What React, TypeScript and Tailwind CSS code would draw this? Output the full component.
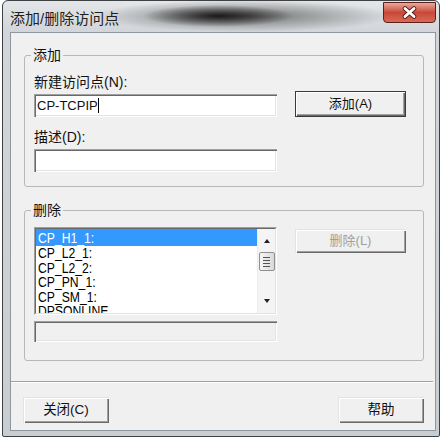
const FONT = "font-['Liberation_Sans','Noto_Sans_CJK_SC',sans-serif]";

const raised =
  "bg-[#f0f0f0] shadow-[inset_1px_1px_0_#e3e3e3,inset_2px_2px_0_#ffffff,inset_-1px_-1px_0_#696969,inset_-2px_-2px_0_#a0a0a0]";
const sunken =
  "shadow-[inset_1px_1px_0_#a0a0a0,inset_2px_2px_0_#696969,inset_-1px_-1px_0_#ffffff,inset_-2px_-2px_0_#e3e3e3]";

const points = ["CP_H1_1:", "CP_L2_1:", "CP_L2_2:", "CP_PN_1:", "CP_SM_1:", "DPSONLINE"];

function Arrow({ up }: { up?: boolean }) {
  return up ? (
    <div className="w-0 h-0 border-x-[3.5px] border-x-transparent border-b-[4px] border-b-[#222]" />
  ) : (
    <div className="w-0 h-0 border-x-[3.5px] border-x-transparent border-t-[4px] border-t-[#222]" />
  );
}

function ListBox() {
  return (
    <div className="w-[243px] h-[88px] border border-t-[#a0a0a0] border-l-[#a0a0a0] border-r-white border-b-white">
      <div className="h-full flex bg-white border border-t-[#696969] border-l-[#696969] border-r-[#e3e3e3] border-b-[#e3e3e3]">
        <div className="flex-1 overflow-hidden text-[14.5px] text-black">
          {points.map((p, i) => (
            <div
              key={p}
              className={
                i === 0
                  ? "h-[17px] pt-[2px] pl-[2px] leading-[15px] bg-[#3399ff] text-white"
                  : "h-[14.6px] pl-[2px] leading-[15px] whitespace-nowrap"
              }
            >
              <span className="inline-block origin-left scale-x-[0.84]">{p}</span>
            </div>
          ))}
        </div>
        <div className="w-[18px] flex flex-col items-center bg-[#f4f4f4] border-l border-[#ececec]">
          <div className="h-[19px] flex items-center justify-center pt-[4px]">
            <Arrow up />
          </div>
          <div className="mt-[4px] w-[16px] h-[19px] rounded-[2px] border border-[#8f8f8f] bg-gradient-to-r from-[#f6f6f6] to-[#d9d9d9] flex flex-col items-center justify-center gap-[2px]">
            <div className="w-[7px] h-px bg-[#555]" />
            <div className="w-[7px] h-px bg-[#555]" />
            <div className="w-[7px] h-px bg-[#555]" />
            <div className="w-[7px] h-px bg-[#555]" />
          </div>
          <div className="flex-1" />
          <div className="h-[14px] flex items-start justify-center">
            <Arrow />
          </div>
        </div>
      </div>
    </div>
  );
}

export default function App() {
  return (
    <div className={`w-[444px] h-[445px] bg-white pl-[2px] ${FONT}`}>
      <div className="w-[438px] h-[437px] flex flex-col border border-[#3d4247] rounded-t-[6px] rounded-b-[2px] pl-[7px] pr-[3px] pb-[5px] bg-[image:radial-gradient(ellipse_75px_11px_at_215px_15px,rgba(15,15,15,0.9),rgba(15,15,15,0)_100%),radial-gradient(ellipse_150px_16px_at_240px_15px,rgba(70,70,70,0.75),rgba(90,90,90,0)_100%),linear-gradient(to_bottom,#e4e6e8,#d2d6da_30px,#c8cdd2)]">
        <div className="h-[31px] flex items-start">
          <div className="mt-[9px] text-[15px] leading-[18px] text-[#1e1e1e]">添加/删除访问点</div>
          <div className="ml-auto mt-[1px] w-[53px] h-[21px] rounded-b-[4px] border border-[#5a2019] bg-gradient-to-b from-[#e9a999] via-[#c8473a] to-[#d86a55] flex items-center justify-center">
            <svg width="17" height="13" viewBox="0 0 17 13">
              <path d="M4 2.5 L13 10.5 M13 2.5 L4 10.5" stroke="#5a2019" strokeWidth="4.6" strokeLinecap="round" />
              <path d="M4 2.5 L13 10.5 M13 2.5 L4 10.5" stroke="#fff" strokeWidth="2.8" strokeLinecap="round" />
            </svg>
          </div>
        </div>

        <div className="h-[399px] w-[426px] bg-[#f0f0f0] border border-[#8e969e] flex flex-col text-[13.5px] text-[#111]">
          <fieldset className="ml-[13px] mt-[14px] w-[400px] border border-[#b8b8b8] rounded-[3px] px-[6px] pb-[14px]">
            <legend className="px-[2px] text-[14px] leading-[16px]">添加</legend>
            <div className="pl-[3px]">
              <div className="mt-[11px] text-[14px] leading-[16px]">新建访问点(N):</div>
              <div className="mt-[1px] flex items-end">
                <div className={`w-[243px] h-[23px] bg-white flex items-center pl-[3px] text-[13px] ${sunken}`}>
                  CP-TCPIP
                  <span className="w-px h-[15px] bg-black" />
                </div>
                <button className="ml-[18px] w-[111px] h-[26px] bg-[#f0f0f0] border border-[#3a3a3a] shadow-[inset_1px_1px_0_#ffffff,inset_-1px_-1px_0_#696969,inset_-2px_-2px_0_#a0a0a0] text-[13px] pb-[1px]">
                  添加(A)
                </button>
              </div>
              <div className="mt-[12px] text-[14px] leading-[16px]">描述(D):</div>
              <div className={`mt-[4px] w-[243px] h-[23px] bg-white ${sunken}`} />
            </div>
          </fieldset>

          <fieldset className="ml-[13px] mt-[15px] w-[400px] border border-[#b8b8b8] rounded-[3px] px-[6px] pb-[18px]">
            <legend className="px-[2px] text-[14px] leading-[16px]">删除</legend>
            <div className="pl-[3px]">
              <div className="mt-[9px] flex items-start">
                <ListBox />
                <button className={`ml-[18px] mt-[2px] w-[111px] h-[24px] text-[13px] text-[#a0a0a0] ${raised}`}>
                  删除(L)
                </button>
              </div>
              <div className={`mt-[6px] w-[243px] h-[21px] bg-[#f0f0f0] ${sunken}`} />
            </div>
          </fieldset>

          <div className="mt-[20px] mr-[2px] h-px bg-[#a0a0a0]" />
          <div className="mr-[2px] h-px bg-white" />

          <div className="mt-[14px] flex justify-between pl-[12px] pr-[11px]">
            <button className={`w-[86px] h-[26px] text-[13.5px] ${raised}`}>关闭(C)</button>
            <button className={`w-[86px] h-[26px] text-[13.5px] ${raised}`}>帮助</button>
          </div>
        </div>
      </div>
    </div>
  );
}
